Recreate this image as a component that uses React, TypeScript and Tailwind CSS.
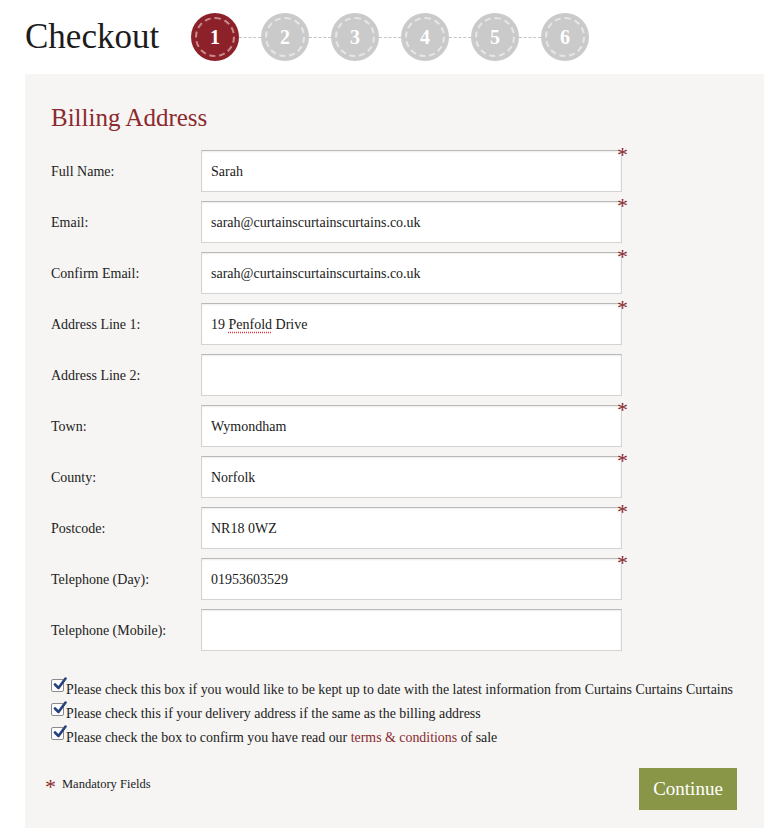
import React from 'react';

interface Field {
  label: string;
  value: string;
  required: boolean;
}

const fields: Field[] = [
  { label: 'Full Name:', value: 'Sarah', required: true },
  { label: 'Email:', value: 'sarah@curtainscurtainscurtains.co.uk', required: true },
  { label: 'Confirm Email:', value: 'sarah@curtainscurtainscurtains.co.uk', required: true },
  { label: 'Address Line 1:', value: '19 Penfold Drive', required: true },
  { label: 'Address Line 2:', value: '', required: false },
  { label: 'Town:', value: 'Wymondham', required: true },
  { label: 'County:', value: 'Norfolk', required: true },
  { label: 'Postcode:', value: 'NR18 0WZ', required: true },
  { label: 'Telephone (Day):', value: '01953603529', required: true },
  { label: 'Telephone (Mobile):', value: '', required: false }
];

const steps = [1, 2, 3, 4, 5, 6];

const StepCircle: React.FC<{ n: number; active: boolean }> = ({ n, active }) => (
  <div
    className={`w-[48px] h-[48px] rounded-full flex items-center justify-center shrink-0 ${
      active ? 'bg-[#8c2129]' : 'bg-[#cacaca]'
    }`}
  >
    <div
      className={`w-[40px] h-[40px] rounded-full border-2 border-dashed flex items-center justify-center ${
        active ? 'border-[#c98a8e]' : 'border-[#e6e6e6]'
      }`}
    >
      <span className="text-white font-bold text-[20px] leading-none">{n}</span>
    </div>
  </div>
);

const CheckBox: React.FC = () => (
  <span className="w-[13px] h-[13px] bg-white border border-[#8a8a8a] rounded-[2px] relative shrink-0 -mt-[9px] mr-[2px]">
    <svg viewBox="0 0 14 14" className="absolute -top-[3px] left-[1px] w-[14px] h-[14px]">
      <path d="M2 7.5 L5.5 11 L12.5 1.5" fill="none" stroke="#23427e" strokeWidth="2.6" strokeLinecap="round" strokeLinejoin="round" />
    </svg>
  </span>
);

const App: React.FC = () => {
  return (
    <div className="w-[774px] min-h-[837px] bg-white text-[#222] font-['Liberation_Serif',serif]">
      {/* Header */}
      <div className="h-[74px] flex items-center pl-[25px]">
        <h1 className="text-[35px] leading-none text-[#1c1c1c] w-[166px] pb-[1px]">Checkout</h1>
        <div className="flex items-center">
          {steps.map((n, i) => (
            <React.Fragment key={n}>
              {i > 0 && <div className="w-[22px] border-t border-dashed border-[#c4c4c4]" />}
              <StepCircle n={n} active={n === 1} />
            </React.Fragment>
          ))}
        </div>
      </div>

      {/* Panel */}
      <div className="ml-[25px] w-[739px] bg-[#f6f5f3] px-[26px] pt-[30px] pb-[18px]">
        <h2 className="text-[25px] leading-[28px] text-[#8b2a2f] mb-[18px]">Billing Address</h2>

        <div className="flex flex-col gap-[9px]">
          {fields.map((f) => (
            <div key={f.label} className="flex items-center">
              <div className="w-[150px] text-[14px] text-[#222]">{f.label}</div>
              <div className="relative">
                <div className="w-[421px] h-[42px] bg-white border border-[#d3d3d3] border-t-[#b9b9b9] shadow-[inset_0_1px_2px_rgba(0,0,0,0.08)] flex items-center pl-[9px] text-[14px] text-[#1a1a1a]">
                  {f.label === 'Address Line 1:' ? (
                    <span>
                      19{' '}
                      <span className="underline decoration-dotted decoration-[#e0393e] underline-offset-[3px]">Penfold</span>{' '}
                      Drive
                    </span>
                  ) : (
                    f.value
                  )}
                </div>
                {f.required && (
                  <span className="absolute -right-[6px] -top-[6px] text-[22px] leading-none text-[#8b2a2f]">*</span>
                )}
              </div>
            </div>
          ))}
        </div>

        {/* Checkboxes */}
        <div className="mt-[30px] flex flex-col gap-[6px] text-[13.9px] leading-[18px] whitespace-nowrap">
          <label className="flex items-center">
            <CheckBox />
            Please check this box if you would like to be kept up to date with the latest information from Curtains Curtains Curtains
          </label>
          <label className="flex items-center">
            <CheckBox />
            Please check this if your delivery address if the same as the billing address
          </label>
          <label className="flex items-center">
            <CheckBox />
            <span>
              Please check the box to confirm you have read our{' '}
              <a href="#" className="text-[#8b2a2f]">terms &amp; conditions</a> of sale
            </span>
          </label>
        </div>

        {/* Footer */}
        <div className="mt-[21px] flex items-center justify-between">
          <div className="flex items-center -ml-[6px] -mt-[10px]">
            <span className="text-[22px] leading-none text-[#8b2a2f] mr-[6px] pt-[6px]">*</span>
            <span className="text-[12.5px] text-[#222]">Mandatory Fields</span>
          </div>
          <button className="w-[98px] h-[42px] bg-[#8a9647] text-white text-[19px] mr-[1px]">Continue</button>
        </div>
      </div>
    </div>
  );
};

export default App;
